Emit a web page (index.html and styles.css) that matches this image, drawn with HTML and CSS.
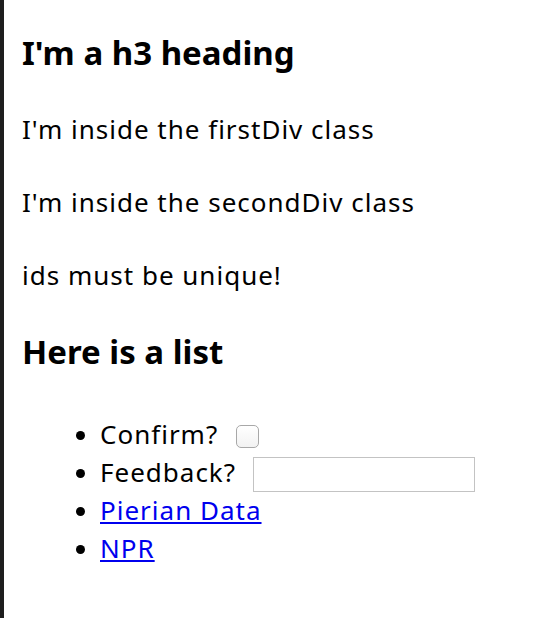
FILE: index.html
```html
<!DOCTYPE html>
<html>
<head>
<meta charset="utf-8">
<link rel="stylesheet" href="styles.css">
</head>
<body>
<div class="frame">
  <h3 class="heading">I'm a h3 heading</h3>
  <div class="firstDiv"><p class="text">I'm inside the firstDiv class</p></div>
  <div class="secondDiv"><p class="text">I'm inside the secondDiv class</p></div>
  <p class="text">ids must be unique!</p>
  <h3 class="heading">Here is a list</h3>
  <ul class="list">
    <li>Confirm? <input class="check" type="checkbox"></li>
    <li>Feedback? <input class="field" type="text"></li>
    <li><a class="link" href="#">Pierian Data</a></li>
    <li><a class="link" href="#">NPR</a></li>
  </ul>
</div>
</body>
</html>
```
FILE: styles.css
```css
html, body {
  margin: 0;
  padding: 0;
  background: #ffffff;
}
body {
  font-family: "Noto Sans", "Noto Sans CJK KR", sans-serif;
  font-size: 26px;
  letter-spacing: 1px;
  color: #000;
}
.frame {
  border-left: 4px solid #1e1e1e;
  min-height: 100vh;
  box-sizing: border-box;
  padding: 31px 0 0 18px;
}
.heading {
  font-size: 33px;
  font-weight: 700;
  letter-spacing: 0;
  line-height: 44px;
  margin: 36px 0;
}
.frame > .heading:first-child {
  margin-top: 0;
}
.text {
  line-height: 37px;
  margin: 36px 0;
}
.list {
  margin: 42px 0 0;
  padding-left: 78px;
  line-height: 37.5px;
}
.list li::marker {
  font-size: 24px;
}
.check {
  appearance: none;
  -webkit-appearance: none;
  width: 23px;
  height: 23px;
  margin: 0 0 0 10px;
  border: 1px solid #a8a8a8;
  border-radius: 5px;
  background: linear-gradient(#ffffff, #f2f2f2);
  vertical-align: -4px;
  box-sizing: border-box;
}
.field {
  width: 222px;
  height: 35px;
  box-sizing: border-box;
  border: 1px solid #c3c3c3;
  padding: 0 4px;
  margin: 0 0 0 9px;
  font-size: 16px;
  vertical-align: middle;
  outline: none;
}
.link {
  color: #0000ee;
  text-decoration: underline;
}
```
